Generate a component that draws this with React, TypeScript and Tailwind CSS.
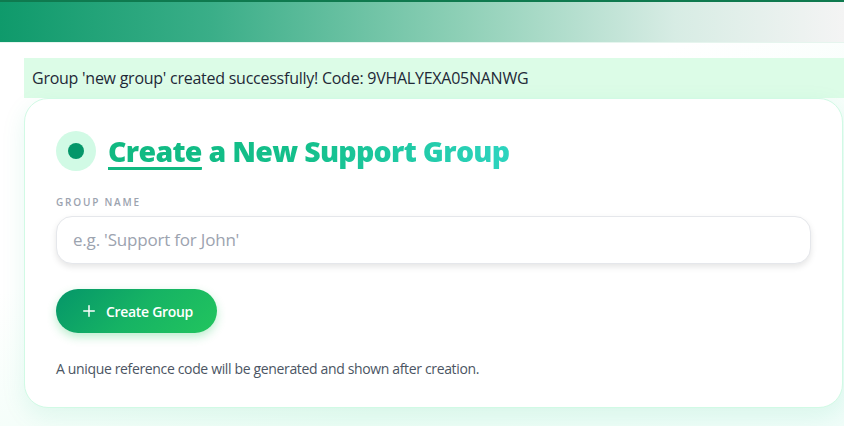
import { Plus } from "lucide-react";

export default function App() {
  return (
    <div className="w-[844px] h-[426px] overflow-hidden bg-white font-['Open_Sans',sans-serif] relative">
      {/* page glow */}
      <div className="absolute inset-0 bg-[linear-gradient(160deg,#ffffff_0%,#ffffff_40%,#ecfdf5_75%,#f0fdf9_100%)]" />

      <div className="relative flex flex-col">
        {/* header bar */}
        <header className="h-[42px] border-t-2 border-[#0f7a4f] bg-[linear-gradient(90deg,#0f9a6b_0%,#3aae88_25%,#8fd0b7_55%,#d7ece4_80%,#f4f4f4_100%)] shadow-[0_1px_0_#e6f5ee]" />

        <div className="pl-6 pt-4">
          {/* success banner */}
          <div className="h-10 bg-[#dcfce7] flex items-center pl-2 text-[16px] text-[#1f2937] tracking-[-0.25px]">
            Group 'new group' created successfully! Code: 9VHALYEXA05NANWG
          </div>

          {/* card */}
          <div className="mr-px h-[310px] bg-white rounded-[24px] border border-[#d1fae5] shadow-[0_8px_24px_rgba(16,185,129,0.10)] pl-[31px] pr-8 pt-8">
            <div className="flex items-center gap-3">
              <div className="w-10 h-10 rounded-full bg-[#d1fae5] flex items-center justify-center shrink-0">
                <div className="w-4 h-4 rounded-full bg-[#059669]" />
              </div>
              <h1 className="text-[28.5px] font-extrabold leading-none tracking-[-0.7px] bg-[linear-gradient(90deg,#10b981_0%,#14c08c_50%,#2dd4bf_100%)] bg-clip-text text-transparent pt-1 pb-1">
                <span className="underline decoration-[3px] underline-offset-[5px] decoration-[#10b981]">Create</span> a New Support Group
              </h1>
            </div>

            <label className="block mt-6 text-[10px] font-semibold tracking-[1.8px] text-[#9ca3af] uppercase">
              Group Name
            </label>
            <div className="mt-[6px] mr-[-1px] h-12 rounded-2xl border border-[#e5e7eb] bg-white shadow-[0_3px_6px_rgba(0,0,0,0.10)] flex items-center px-4">
              <span className="text-[17px] text-[#9ca3af] tracking-[-0.2px]">e.g. 'Support for John'</span>
            </div>

            <button className="mt-[25px] h-11 w-[161px] rounded-full bg-[linear-gradient(135deg,#059669_0%,#16b364_50%,#22c55e_100%)] text-white text-[14px] font-semibold flex items-center justify-center gap-2 shadow-[0_4px_10px_rgba(34,197,94,0.30)] tracking-[-0.3px]">
              <Plus size={18} strokeWidth={2} />
              Create Group
            </button>

            <p className="mt-[25px] text-[14px] text-[#4b5563] tracking-[-0.35px]">
              A unique reference code will be generated and shown after creation.
            </p>
          </div>
        </div>
      </div>
    </div>
  );
}
